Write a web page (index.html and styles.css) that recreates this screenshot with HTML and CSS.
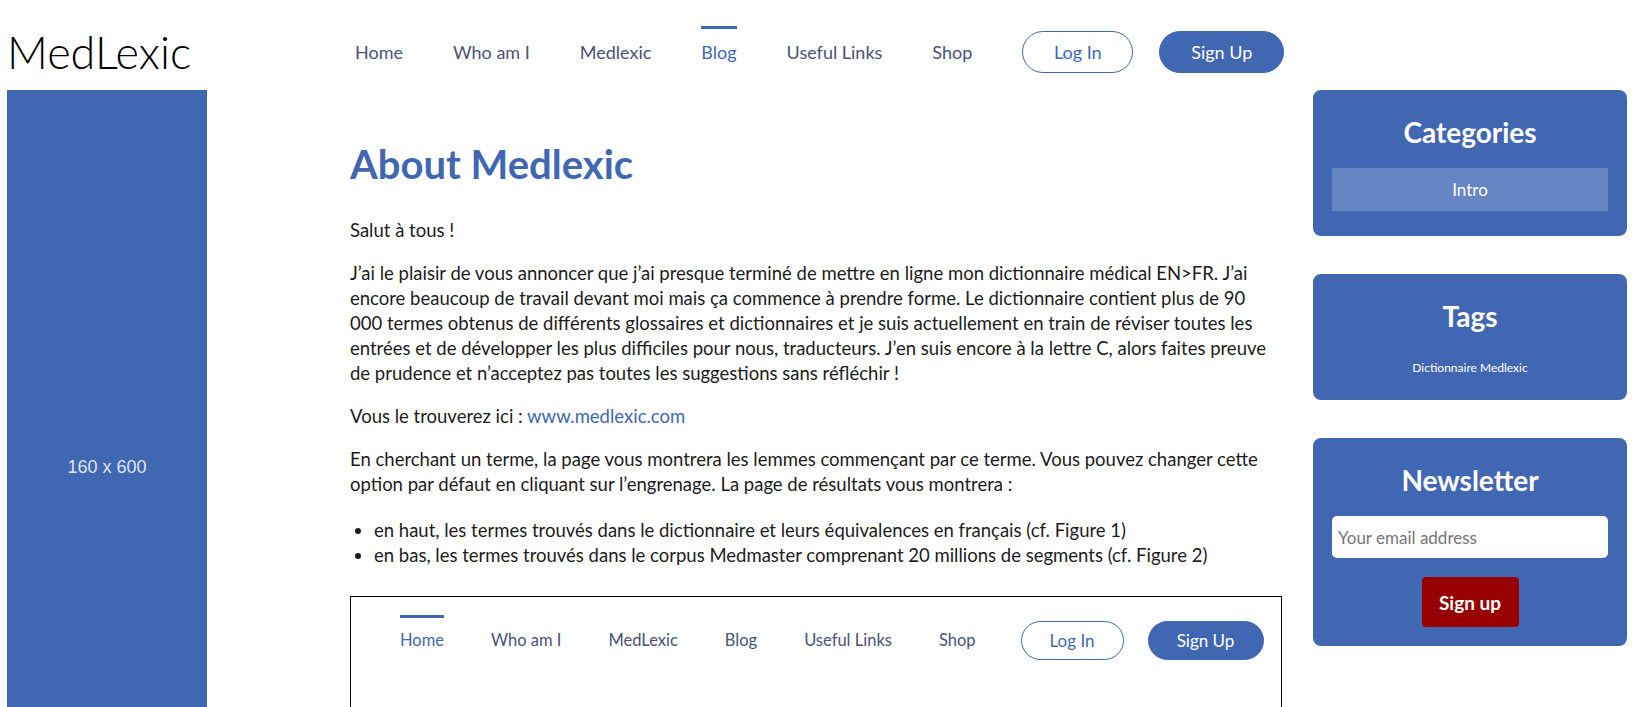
FILE: index.html
```html
<!DOCTYPE html>
<html lang="fr">
<head>
  <meta charset="UTF-8">
  <title>About Medlexic — MedLexic</title>
  <link rel="stylesheet" href="styles.css">
</head>
<body>

<div class="page">
  <header class="topbar">
    <a class="logo" href="#">MedLexic</a>
    <nav class="menu">
      <a href="#">Home</a>
      <a href="#">Who am I</a>
      <a href="#">Medlexic</a>
      <a href="#" class="active">Blog</a>
      <a href="#">Useful Links</a>
      <a href="#">Shop</a>
      <div class="auth">
        <a href="#" class="btn btn-outline">Log In</a>
        <a href="#" class="btn btn-fill">Sign Up</a>
      </div>
    </nav>
  </header>

  <div class="layout">
    <!-- ========= AD ========= -->
    <div class="ad">160 x 600</div>

    <!-- ========= POST ========= -->
    <main class="post">
      <h1>About Medlexic</h1>
      <p>Salut à tous !</p>
      <p>J’ai le plaisir de vous annoncer que j’ai presque terminé de mettre en ligne mon dictionnaire médical EN&gt;FR. J’ai encore beaucoup de travail devant moi mais ça commence à prendre forme. Le dictionnaire contient plus de 90 000 termes obtenus de différents glossaires et dictionnaires et je suis actuellement en train de réviser toutes les entrées et de développer les plus difficiles pour nous, traducteurs. J’en suis encore à la lettre C, alors faites preuve de prudence et n’acceptez pas toutes les suggestions sans réfléchir !</p>
      <p>Vous le trouverez ici : <a href="#">www.medlexic.com</a></p>
      <p>En cherchant un terme, la page vous montrera les lemmes commençant par ce terme. Vous pouvez changer cette option par défaut en cliquant sur l’engrenage. La page de résultats vous montrera :</p>
      <ul>
        <li>en haut, les termes trouvés dans le dictionnaire et leurs équivalences en français (cf. Figure 1)</li>
        <li>en bas, les termes trouvés dans le corpus Medmaster comprenant 20 millions de segments (cf. Figure 2)</li>
      </ul>

      <!-- capture du site -->
      <div class="figure">
        <div class="fig-menu">
          <a href="#" class="active">Home</a>
          <a href="#">Who am I</a>
          <a href="#">MedLexic</a>
          <a href="#">Blog</a>
          <a href="#">Useful Links</a>
          <a href="#">Shop</a>
          <div class="auth">
            <a href="#" class="btn btn-outline">Log In</a>
            <a href="#" class="btn btn-fill">Sign Up</a>
          </div>
        </div>
      </div>
    </main>

    <!-- ========= SIDEBAR ========= -->
    <aside class="sidebar">
      <div class="widget">
        <h3>Categories</h3>
        <a href="#" class="cat">Intro</a>
      </div>
      <div class="widget">
        <h3>Tags</h3>
        <a href="#" class="tag">Dictionnaire Medlexic</a>
      </div>
      <div class="widget">
        <h3>Newsletter</h3>
        <input type="email" class="email" placeholder="Your email address">
        <button class="subscribe">Sign up</button>
      </div>
    </aside>
  </div>
</div>

</body>
</html>
```

FILE: styles.css
```css
/* ---------- Base ---------- */
html, body {
  margin: 0;
  padding: 0;
  background: #ffffff;
  color: #1c1c1c;
  font-family: Lato, "Noto Sans", sans-serif;
}

a { color: #4267b2; text-decoration: none; }

.page { padding: 0 23px 0 7px; }

/* ---------- Header ---------- */
.topbar { display: flex; align-items: center; height: 76px; padding-top: 14px; }
.logo { flex: 0 0 348px; font-size: 45px; font-weight: 300; color: #000; line-height: 1; }

.menu { display: flex; align-items: center; gap: 50px; }
.menu > a {
  font-size: 18px; line-height: 22px; color: #4b5277; white-space: nowrap;
  padding: 12px 0 15px; border-top: 3px solid transparent;
}
.menu > a.active { color: #4267b2; border-top-color: #4267b2; }

.auth { display: flex; gap: 26px; }
.btn {
  display: flex; align-items: center; justify-content: center; flex-shrink: 0;
  height: 42px; box-sizing: border-box; border-radius: 21px;
  font-size: 18px; border: 1px solid #4267b2;
}
.btn-outline { width: 111px; color: #4267b2; background: #fff; }
.btn-fill { width: 125px; color: #fff; background: #4267b2; }

/* ---------- Layout ---------- */
.layout { display: flex; align-items: flex-start; }

.ad {
  flex: 0 0 200px; height: 754px;
  display: flex; align-items: center; justify-content: center;
  background: #4267b2; color: #dfe5f1;
  font-family: "Liberation Sans", Arial, sans-serif; font-size: 18px;
}

/* ---------- Post ---------- */
.post { flex: 0 0 932px; min-width: 0; margin-left: 143px; font-size: 18.5px; line-height: 25px; }
.post h1 { margin: 50px 0 30px; font-size: 40px; line-height: 48px; font-weight: 700; color: #4267b2; }
.post p { margin: 0 0 18px; }
.post ul { margin: 21px 0 28px; padding-left: 24px; }

.figure { border: 1px solid #000; height: 300px; padding: 18px 14px 0 49px; overflow: hidden; }
.fig-menu { display: flex; align-items: center; gap: 47px; }
.fig-menu > a {
  font-size: 16.5px; line-height: 20px; color: #4b5277; white-space: nowrap;
  padding: 12px 0 15px; border-top: 3px solid transparent;
}
.fig-menu > a.active { color: #4267b2; border-top-color: #4267b2; }
.fig-menu .auth { gap: 24px; margin-left: -2px; }
.fig-menu .btn { height: 39px; font-size: 17px; border-radius: 20px; }
.fig-menu .btn-outline { width: 103px; }
.fig-menu .btn-fill { width: 116px; }

/* ---------- Sidebar ---------- */
.sidebar { flex: 0 0 314px; margin-left: 31px; display: flex; flex-direction: column; gap: 38px; }
.widget {
  background: #4267b2; border-radius: 8px; color: #fff;
  padding: 22px 19px 22px; text-align: center;
  display: flex; flex-direction: column; align-items: center;
}
.widget h3 { margin: 0; font-size: 28px; line-height: 40px; font-weight: 700; }

.cat {
  align-self: stretch; margin: 16px 0 3px; height: 43px; line-height: 43px;
  background: #6585c3; color: #fff; font-size: 17px;
}
.tag { margin-top: 22px; font-size: 12px; line-height: 20px; color: #fff; }

.email {
  align-self: stretch; margin-top: 16px; height: 42px; box-sizing: border-box;
  border: 0; border-radius: 5px; padding: 0 6px;
  font-family: inherit; font-size: 17px; color: #333;
}
.email::placeholder { color: #757575; }
.subscribe {
  margin: 19px 0 -3px; width: 97px; height: 50px; border: 0; border-radius: 4px;
  background: #990000; color: #fff; font-family: inherit; font-size: 19px; font-weight: 700;
}
```
